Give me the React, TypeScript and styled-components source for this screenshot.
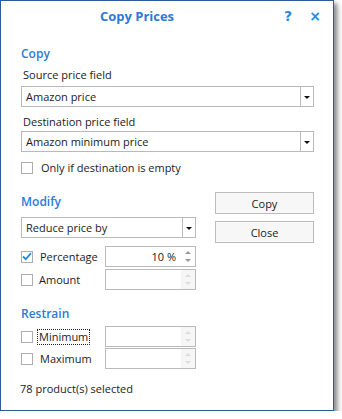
import React from "react";
import styled, { createGlobalStyle } from "styled-components";

const Global = createGlobalStyle`
  html, body { margin: 0; padding: 0; background: #ffffff; }
  body { font-family: "Open Sans", "Noto Sans", sans-serif; font-size: 11px; color: #1b1b1b; }
  * { box-sizing: border-box; }
`;

const Window = styled.div`
  width: 334px;
  height: 411px;
  border: 1px solid #2c5a9c;
  background: #ffffff;
  box-shadow: 3px 3px 4px rgba(0, 0, 0, 0.35), 5px 5px 6px rgba(0, 0, 0, 0.15);
  display: flex;
  flex-direction: column;
`;

const TitleBar = styled.div`
  height: 29px;
  display: flex;
  align-items: center;
  padding-right: 6px;
`;

const Title = styled.div`
  flex: 1;
  text-align: center;
  font-weight: 700;
  font-size: 13px;
  color: #2b7bd6;
  padding-top: 1px;
`;

const TitleIcon = styled.div<{ $w: number }>`
  width: ${(p) => p.$w}px;
  text-align: center;
  font-weight: 700;
  font-size: 14px;
  color: #2589e8;
  font-family: "DejaVu Sans", sans-serif;
`;

const Content = styled.div`
  padding: 0 19px 0 20px;
  display: flex;
  flex-direction: column;
`;

const SectionHeader = styled.div<{ $mt: number }>`
  margin-top: ${(p) => p.$mt}px;
  height: 16px;
  line-height: 16px;
  font-size: 12px;
  font-weight: 600;
  color: #2b7bd6;
`;

const FieldLabel = styled.div<{ $mt: number }>`
  margin-top: ${(p) => p.$mt}px;
  padding-left: 2px;
  height: 16px;
  line-height: 16px;
`;

const Select = styled.div<{ $mt: number }>`
  margin-top: ${(p) => p.$mt}px;
  height: 21px;
  border: 1px solid #b9b9b9;
  display: flex;
  align-items: stretch;
  background: #fff;
`;

const SelectValue = styled.div`
  flex: 1;
  padding-left: 4px;
  display: flex;
  align-items: center;
`;

const SelectArrow = styled.div`
  width: 13px;
  border-left: 1px solid #b9b9b9;
  display: flex;
  align-items: center;
  justify-content: center;
  &::after {
    content: "";
    border-left: 3px solid transparent;
    border-right: 3px solid transparent;
    border-top: 3px solid #111;
    margin-top: 1px;
  }
`;

const CheckRow = styled.div<{ $mt: number }>`
  margin-top: ${(p) => p.$mt}px;
  height: 21px;
  display: flex;
  align-items: center;
`;

const Box = styled.div`
  width: 12px;
  height: 12px;
  border: 1px solid #adadad;
  background: #fff;
  flex-shrink: 0;
  display: flex;
  align-items: center;
  justify-content: center;
`;

const CheckLabel = styled.span<{ $ml: number; $focus?: boolean }>`
  margin-left: ${(p) => p.$ml}px;
  padding: 0 1px;
  line-height: 14px;
  border: 1px dotted ${(p) => (p.$focus ? "#222" : "transparent")};
`;

const Spinner = styled.div`
  margin-left: auto;
  width: 91px;
  height: 21px;
  border: 1px solid #b9b9b9;
  display: flex;
`;

const SpinValue = styled.div`
  flex: 1;
  text-align: right;
  padding-right: 5px;
  line-height: 19px;
`;

const SpinArrows = styled.div<{ $disabled?: boolean }>`
  width: 14px;
  background: ${(p) => (p.$disabled ? "#f6f6f6" : "#fff")};
  display: flex;
  flex-direction: column;
  align-items: center;
  justify-content: center;
  gap: 5px;
`;

const Tri = styled.div<{ $up?: boolean; $disabled?: boolean }>`
  border-left: 3px solid transparent;
  border-right: 3px solid transparent;
  ${(p) =>
    p.$up
      ? `border-bottom: 3px solid ${p.$disabled ? "#dcdcdc" : "#9a9a9a"};`
      : `border-top: 3px solid ${p.$disabled ? "#dcdcdc" : "#9a9a9a"};`}
`;

const ModifyRow = styled.div`
  margin-top: 14px;
  display: flex;
  justify-content: space-between;
  align-items: flex-start;
`;

const Column = styled.div<{ $pt?: number }>`
  width: 175px;
  padding-top: ${(p) => p.$pt ?? 0}px;
  display: flex;
  flex-direction: column;
`;

const ButtonCol = styled.div`
  width: 99px;
  display: flex;
  flex-direction: column;
  gap: 7px;
`;

const Button = styled.div`
  height: 22px;
  border: 1px solid #bcbcbc;
  background: #f7f7f7;
  display: flex;
  align-items: center;
  justify-content: center;
`;

const Footer = styled.div`
  margin-top: 12px;
  margin-left: -1px;
  line-height: 16px;
`;

const Check = () => (
  <svg width="10" height="9" viewBox="0 0 10 9">
    <path d="M1 4.5 L3.8 7.2 L9 1.2" fill="none" stroke="#2a8ad6" strokeWidth="1.8" />
  </svg>
);

const SpinBox: React.FC<{ value?: string; disabled?: boolean }> = ({ value, disabled }) => (
  <Spinner>
    <SpinValue>{value}</SpinValue>
    <SpinArrows $disabled={disabled}>
      <Tri $up $disabled={disabled} />
      <Tri $disabled={disabled} />
    </SpinArrows>
  </Spinner>
);

const Dropdown: React.FC<{ value: string; mt: number }> = ({ value, mt }) => (
  <Select $mt={mt}>
    <SelectValue>{value}</SelectValue>
    <SelectArrow />
  </Select>
);

export default function App() {
  return (
    <>
      <Global />
      <Window>
        <TitleBar>
          <Title>Copy Prices</Title>
          <TitleIcon $w={30}>?</TitleIcon>
          <TitleIcon $w={24}>×</TitleIcon>
        </TitleBar>
        <Content>
          <SectionHeader $mt={16}>Copy</SectionHeader>
          <FieldLabel $mt={5}>Source price field</FieldLabel>
          <Dropdown value="Amazon price" mt={3} />
          <FieldLabel $mt={7}>Destination price field</FieldLabel>
          <Dropdown value="Amazon minimum price" mt={1} />
          <CheckRow $mt={5}>
            <Box />
            <CheckLabel $ml={6}>Only if destination is empty</CheckLabel>
          </CheckRow>
          <ModifyRow>
            <Column $pt={2}>
              <SectionHeader $mt={0}>Modify</SectionHeader>
              <Dropdown value="Reduce price by" mt={7} />
              <CheckRow $mt={8}>
                <Box>
                  <Check />
                </Box>
                <CheckLabel $ml={5}>Percentage</CheckLabel>
                <SpinBox value="10 %" />
              </CheckRow>
              <CheckRow $mt={2}>
                <Box />
                <CheckLabel $ml={4}>Amount</CheckLabel>
                <SpinBox disabled />
              </CheckRow>
            </Column>
            <ButtonCol>
              <Button>Copy</Button>
              <Button>Close</Button>
            </ButtonCol>
          </ModifyRow>
          <SectionHeader $mt={16}>Restrain</SectionHeader>
          <Column>
            <CheckRow $mt={4}>
              <Box />
              <CheckLabel $ml={4} $focus>
                Minimum
              </CheckLabel>
              <SpinBox disabled />
            </CheckRow>
            <CheckRow $mt={1}>
              <Box />
              <CheckLabel $ml={5}>Maximum</CheckLabel>
              <SpinBox disabled />
            </CheckRow>
          </Column>
          <Footer>78 product(s) selected</Footer>
        </Content>
      </Window>
    </>
  );
}
